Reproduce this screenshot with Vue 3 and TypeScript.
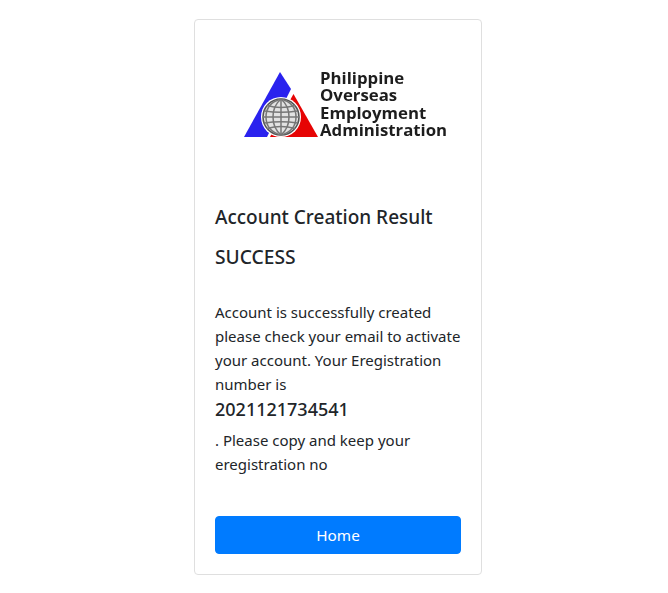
<script setup lang="ts">
const logoLines: string[] = ['Philippine', 'Overseas', 'Employment', 'Administration']
const meridians: string[] = [
  'M281 99v36',
  'M281 99c-6 5-8 11-8 18s2 13 8 18',
  'M281 99c6 5 8 11 8 18s-2 13-8 18',
  'M281 99c-11 3-15 10-15 18s4 15 15 18',
  'M281 99c11 3 15 10 15 18s-4 15-15 18',
  'M263 117h36',
  'M267 105.500c9 2.500 19 2.500 28 0',
  'M264.500 111c10 1.500 23 1.500 33 0',
  'M264.500 123c10-1.500 23-1.500 33 0',
  'M267 128.500c9-2.500 19-2.500 28 0',
]
</script>

<template>
  <main class="page">
    <section class="card">
      <div class="logo">
        <svg class="mark" viewBox="243 70 76 70" width="76" height="70" aria-hidden="true">
          <path d="M280 72 291 89 267 137H244Z" fill="#2a22ee" />
          <path d="M293.500 94 318 137H270L280 118Z" fill="#e60404" />
          <circle cx="281" cy="117" r="20" fill="#fff" />
          <circle cx="281" cy="117" r="18" fill="#e2e2e2" stroke="#555" stroke-width="1.600" />
          <path v-for="d in meridians" :key="d" :d="d" fill="none" stroke="#777" stroke-width="1.500" />
        </svg>
        <div class="logo-text">
          <span v-for="line in logoLines" :key="line">{{ line }}</span>
        </div>
      </div>
      <h5 class="title">Account Creation Result</h5>
      <h5 class="status">SUCCESS</h5>
      <p class="copy">Account is successfully created please check your email to activate your account. Your Eregistration number is</p>
      <h5 class="number">2021121734541</h5>
      <p class="copy note">. Please copy and keep your eregistration no</p>
      <button class="home" type="button">Home</button>
    </section>
  </main>
</template>

<style>
html, body { margin: 0; background: #fff; }
</style>

<style scoped>
.page {
  display: flex;
  justify-content: center;
  padding: 19px 0 0 8px;
  font-family: "Noto Sans", "Open Sans", sans-serif;
  color: #212529;
}
.card {
  box-sizing: border-box;
  width: 288px;
  height: 556px;
  padding: 20px;
  border: 1px solid #dfdfdf;
  border-radius: 4px;
  background: #fff;
  display: flex;
  flex-direction: column;
}
.logo {
  height: 130px;
  margin-bottom: 35px;
  display: flex;
  align-items: center;
  justify-content: flex-start;
  padding-left: 28px;
  filter: blur(0.3px);
}
.mark { flex: none; margin-top: -1px; }
.logo-text {
  display: flex;
  flex-direction: column;
  margin: -3px 0 0 1px;
  font-family: "Open Sans", sans-serif;
  font-weight: 700;
  font-size: 16.800px;
  line-height: 17.500px;
  white-space: nowrap;
  color: #1d1d1d;
}
.title, .status, .number {
  margin: 0;
  font-weight: 500;
  line-height: 24px;
}
.title { margin-bottom: 16px; font-size: 19px; }
.status { margin-bottom: 31px; font-size: 19.200px; }
.copy {
  margin: 0;
  font-size: 15px;
  line-height: 24px;
}
.number { margin-top: 1px; margin-bottom: 7px; font-size: 18px; }
.home {
  margin-top: auto;
  height: 38px;
  border: 1px solid #007bff;
  border-radius: 4px;
  background: #007bff;
  color: #fff;
  font: 400 15.300px/1.500 "Noto Sans", "Open Sans", sans-serif;
}
</style>
